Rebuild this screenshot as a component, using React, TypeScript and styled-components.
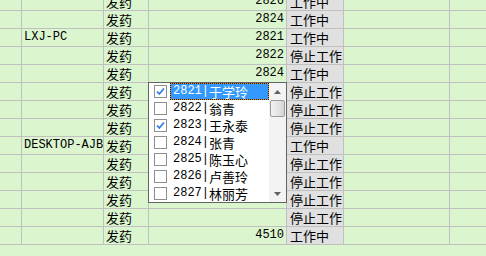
import styled, { createGlobalStyle } from "styled-components";

type Row = { host: string; action: string; code: string; status: string };

const W = "工作中";
const S = "停止工作";

const rows: Row[] = [
  { host: "", action: "发药", code: "2826", status: W },
  { host: "", action: "发药", code: "2824", status: W },
  { host: "LXJ-PC", action: "发药", code: "2821", status: W },
  { host: "", action: "发药", code: "2822", status: S },
  { host: "", action: "发药", code: "2824", status: W },
  { host: "", action: "发药", code: "", status: S },
  { host: "", action: "发药", code: "", status: S },
  { host: "", action: "发药", code: "", status: S },
  { host: "DESKTOP-AJBI", action: "发药", code: "", status: W },
  { host: "", action: "发药", code: "", status: S },
  { host: "", action: "发药", code: "", status: S },
  { host: "", action: "发药", code: "", status: S },
  { host: "", action: "发药", code: "", status: S },
  { host: "", action: "发药", code: "4510", status: W },
];

const people = [
  { id: "2821", name: "于学玲", checked: true },
  { id: "2822", name: "翁青", checked: false },
  { id: "2823", name: "王永泰", checked: true },
  { id: "2824", name: "张青", checked: false },
  { id: "2825", name: "陈玉心", checked: false },
  { id: "2826", name: "卢善玲", checked: false },
  { id: "2827", name: "林丽芳", checked: false },
];

function App() {
  return (
    <Sheet>
      <GlobalStyle />
      <Grid>
        {rows.map((r, i) => (
          <GridRow key={i}>
            <Cell />
            <Cell $mono>
              <Clip>{r.host}</Clip>
            </Cell>
            <Cell>{r.action}</Cell>
            <Cell $mono $right>
              {r.code}
            </Cell>
            <Cell $gray>{r.status}</Cell>
            <Cell />
            <Cell $last />
          </GridRow>
        ))}
        <Dropdown>
          <List>
            {people.map((p, i) => (
              <Item key={p.id}>
                <Box>
                  {p.checked && (
                    <svg width="11" height="11" viewBox="0 0 11 11">
                      <path
                        d="M2 5.5 L4.3 8 L9 2.5"
                        fill="none"
                        stroke="#2f7fe0"
                        strokeWidth="1.8"
                      />
                    </svg>
                  )}
                </Box>
                <Label $selected={i === 0}>
                  <Num>{p.id}|</Num>
                  <Name>{p.name}</Name>
                </Label>
              </Item>
            ))}
          </List>
          <ScrollBar>
            <Arrow>
              <svg width="7" height="4" viewBox="0 0 7 4">
                <path d="M3.5 0 L7 4 L0 4 Z" fill="#606060" />
              </svg>
            </Arrow>
            <Thumb />
            <Track />
            <Arrow>
              <svg width="7" height="4" viewBox="0 0 7 4">
                <path d="M0 0 L7 0 L3.5 4 Z" fill="#606060" />
              </svg>
            </Arrow>
          </ScrollBar>
        </Dropdown>
      </Grid>
    </Sheet>
  );
}

export default App;

const Sheet = styled.div`
  width: 100%;
  height: 100vh;
  background: #dbf5cf;
  overflow: hidden;
`;

const Grid = styled.div`
  position: relative;
  margin-top: -7px;
`;

const GridRow = styled.div`
  display: grid;
  grid-template-columns: 22px 82px 45px 138px 57px 106px 1fr;
  height: 18px;
`;

const Cell = styled.div<{ $mono?: boolean; $right?: boolean; $gray?: boolean; $last?: boolean }>`
  box-sizing: border-box;
  height: 18px;
  border-bottom: 1px solid #c0c0c0;
  border-right: ${(p) => (p.$last ? "none" : "1px solid #c0c0c0")};
  background: ${(p) => (p.$gray ? "#e0e0e0" : "transparent")};
  display: flex;
  align-items: center;
  justify-content: ${(p) => (p.$right ? "flex-end" : "flex-start")};
  padding: ${(p) => (p.$right ? "0 2px 0 0" : p.$gray ? "0 0 0 3px" : "0 0 0 2px")};
  font-family: ${(p) =>
    p.$mono ? "'Liberation Mono', monospace" : "'Noto Sans CJK SC', sans-serif"};
  font-size: ${(p) => (p.$mono ? "12px" : "13px")};
  line-height: 17px;
  color: #000;
  white-space: nowrap;
  overflow: hidden;
`;

const Clip = styled.span`
  display: block;
  min-width: 0;
  overflow: hidden;
  white-space: nowrap;
`;

const Dropdown = styled.div`
  position: absolute;
  left: 148px;
  top: 89px;
  width: 139px;
  height: 121px;
  box-sizing: border-box;
  border: 1px solid #646464;
  background: #fff;
  display: flex;
`;

const List = styled.div`
  flex: 1;
  display: flex;
  flex-direction: column;
`;

const Item = styled.div`
  height: 17px;
  display: flex;
  align-items: center;
  padding-left: 5px;
  gap: 3px;
`;

const Box = styled.div`
  width: 13px;
  height: 13px;
  box-sizing: border-box;
  border: 1px solid #8e8f8f;
  background: #fff;
  display: flex;
  align-items: center;
  justify-content: center;
`;

const Label = styled.div<{ $selected?: boolean }>`
  flex: 1;
  height: 17px;
  box-sizing: border-box;
  display: flex;
  align-items: center;
  padding-left: 2px;
  line-height: 15px;
  color: ${(p) => (p.$selected ? "#fff" : "#000")};
  border: 1px ${(p) => (p.$selected ? "dotted #1a1a1a" : "solid transparent")};
  background: ${(p) =>
    p.$selected
      ? "linear-gradient(#3399ff, #3399ff) padding-box, linear-gradient(#e8922a, #e8922a) border-box"
      : "transparent"};
  white-space: nowrap;
`;

const Num = styled.span`
  font-family: "Liberation Mono", monospace;
  font-size: 12px;
`;

const Name = styled.span`
  font-family: "Noto Sans CJK SC", sans-serif;
  font-size: 13px;
`;

const ScrollBar = styled.div`
  width: 17px;
  background: #f3f3f3;
  display: flex;
  flex-direction: column;
`;

const Arrow = styled.div`
  height: 17px;
  display: flex;
  align-items: center;
  justify-content: center;
`;

const Thumb = styled.div`
  margin: 0 1px;
  height: 17px;
  box-sizing: border-box;
  border: 1px solid #9b9b9b;
  border-radius: 2px;
  background: linear-gradient(90deg, #f2f2f2, #e2e2e2 60%, #d4d4d4);
`;

const Track = styled.div`
  flex: 1;
`;

const GlobalStyle = createGlobalStyle`
  * {
    margin: 0;
    padding: 0;
    box-sizing: border-box;
  }

  body {
    margin: 0;
    font-family: "Noto Sans CJK SC", sans-serif;
  }
`;
